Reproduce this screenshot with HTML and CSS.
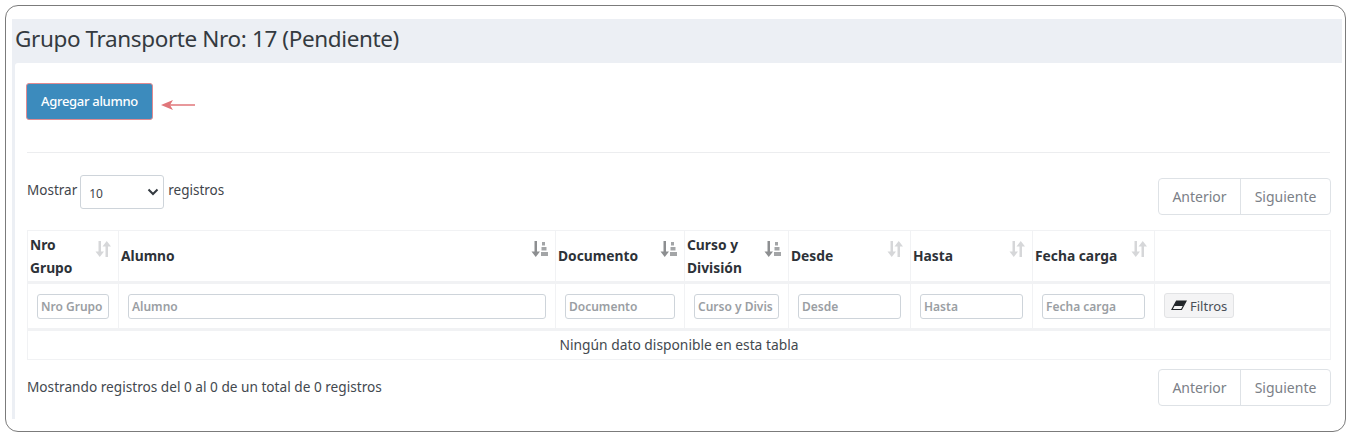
FILE: index.html
```html
<!DOCTYPE html>
<html lang="es">
<head>
<meta charset="utf-8">
<title>Grupo Transporte</title>
<link rel="stylesheet" href="styles.css">
</head>
<body>
<div class="frame">
  <div class="panel">
    <h1 class="title">Grupo Transporte Nro: 17 (Pendiente)</h1>
    <div class="card">
      <div class="actions">
        <button class="btn-add">Agregar alumno</button>
        <svg class="arrow" width="36" height="12" viewBox="0 0 36 12"><path d="M34 6H8" fill="none" stroke="#e0767a" stroke-width="1.700"/><path d="M0 6 12 1 9 6l3 5z" fill="#e0767a"/></svg>
      </div>
      <hr class="rule">
      <div class="top-bar">
        <label class="length">Mostrar
          <span class="select"><span>10</span><svg width="12" height="8" viewBox="0 0 12 8"><path d="M1.500 1.500 6 6l4.500-4.500" fill="none" stroke="#343a40" stroke-width="2"/></svg></span>
          registros</label>
        <div class="pager"><span class="page">Anterior</span><span class="page">Siguiente</span></div>
      </div>
      <table class="grid">
        <colgroup>
          <col class="c1"><col class="c2"><col class="c3"><col class="c4"><col class="c5"><col class="c6"><col class="c7"><col class="c8">
        </colgroup>
        <thead>
          <tr class="head">
            <th>Nro Grupo<svg class="sort" width="16" height="16" viewBox="0 0 16 16"><path d="M3.500 0H6v10.500h3L4.750 16 .5 10.500h3zM10.500 16H13V5.500h3L11.750 0 7.500 5.500h3z" fill="#d6d7d9"/></svg></th>
            <th>Alumno<svg class="sort" width="17" height="16" viewBox="0 0 17 16"><path d="M3.500 0H6v10.500h3L4.750 16 .5 10.500h3z" fill="#8d8f91"/><path d="M11 1h3v3.500h-3zM10.500 6h5v3.500h-5zM10 11h7v4h-7z" fill="#a3a5a7"/></svg></th>
            <th>Documento<svg class="sort" width="17" height="16" viewBox="0 0 17 16"><path d="M3.500 0H6v10.500h3L4.750 16 .5 10.500h3z" fill="#8d8f91"/><path d="M11 1h3v3.500h-3zM10.500 6h5v3.500h-5zM10 11h7v4h-7z" fill="#a3a5a7"/></svg></th>
            <th>Curso y División<svg class="sort" width="17" height="16" viewBox="0 0 17 16"><path d="M3.500 0H6v10.500h3L4.750 16 .5 10.500h3z" fill="#8d8f91"/><path d="M11 1h3v3.500h-3zM10.500 6h5v3.500h-5zM10 11h7v4h-7z" fill="#a3a5a7"/></svg></th>
            <th>Desde<svg class="sort" width="16" height="16" viewBox="0 0 16 16"><path d="M3.500 0H6v10.500h3L4.750 16 .5 10.500h3zM10.500 16H13V5.500h3L11.750 0 7.500 5.500h3z" fill="#d6d7d9"/></svg></th>
            <th>Hasta<svg class="sort" width="16" height="16" viewBox="0 0 16 16"><path d="M3.500 0H6v10.500h3L4.750 16 .5 10.500h3zM10.500 16H13V5.500h3L11.750 0 7.500 5.500h3z" fill="#d6d7d9"/></svg></th>
            <th>Fecha carga<svg class="sort" width="16" height="16" viewBox="0 0 16 16"><path d="M3.500 0H6v10.500h3L4.750 16 .5 10.500h3zM10.500 16H13V5.500h3L11.750 0 7.500 5.500h3z" fill="#d6d7d9"/></svg></th>
            <th></th>
          </tr>
          <tr class="filters">
            <td><span class="field">Nro Grupo</span></td>
            <td><span class="field">Alumno</span></td>
            <td><span class="field">Documento</span></td>
            <td><span class="field">Curso y Divis</span></td>
            <td><span class="field">Desde</span></td>
            <td><span class="field">Hasta</span></td>
            <td><span class="field">Fecha carga</span></td>
            <td><button class="btn-filter"><svg width="16" height="11" viewBox="0 0 16 11"><path d="M5.500 1H15L10.500 9.500H1z" fill="none" stroke="#212529" stroke-width="1.200"/><path d="M5.500 1H15L12 6H3z" fill="#212529"/></svg>Filtros</button></td>
          </tr>
        </thead>
        <tbody>
          <tr class="empty"><td colspan="8">Ningún dato disponible en esta tabla</td></tr>
        </tbody>
      </table>
      <div class="bottom-bar">
        <div class="info">Mostrando registros del 0 al 0 de un total de 0 registros</div>
        <div class="pager"><span class="page">Anterior</span><span class="page">Siguiente</span></div>
      </div>
    </div>
  </div>
</div>
</body>
</html>
```
FILE: styles.css
```css
* { box-sizing: border-box; }
html, body { margin: 0; background: #fff; }
body {
  height: 439px;
  padding: 5px 5px 7px 5px;
  font-family: "Noto Sans", sans-serif;
  color: #343a40;
  overflow: hidden;
}
.frame {
  height: 427px;
  border: 1px solid #7b7b7b;
  border-radius: 13px;
  padding: 13px 3px 0 6px;
  overflow: hidden;
}
.panel {
  height: 400px;
  background: #eceff4;
  display: flex;
  flex-direction: column;
}
.title {
  margin: 0;
  height: 44px;
  padding: 3px 0 0 3px;
  font-size: 22.500px;
  letter-spacing: -0.380px;
  line-height: 34px;
  font-weight: 400;
  color: #343a40;
}
.card {
  flex: 1;
  margin-left: 3px;
  background: #fff;
  border-radius: 3px 0 0 0;
  padding: 20px 12px 0 12px;
}
.actions {
  display: flex;
  align-items: center;
  gap: 8px;
  margin-left: -1px;
  height: 37px;
}
.btn-add {
  width: 127px;
  height: 37px;
  padding: 0 0 2px;
  background: #3c8bbd;
  border: 1px solid #e08a90;
  border-radius: 3px;
  color: #fff;
  font: 500 13px "Noto Sans", sans-serif;
  letter-spacing: -0.300px;
}
.arrow { margin-top: 7px; }
.rule {
  margin: 32px 0 0;
  border: 0;
  border-top: 1px solid #ecedef;
}
.top-bar {
  display: flex;
  justify-content: space-between;
  align-items: flex-start;
  height: 77px;
  padding-top: 22px;
}
.length {
  display: flex;
  align-items: flex-start;
  font-size: 13.500px;
  line-height: 31px;
  gap: 3px;
  color: #3f454b;
  height: 33px;
}
.select {
  width: 84px;
  height: 34px;
  margin-right: 1px;
  border: 1px solid #ced4da;
  border-radius: 3px;
  display: flex;
  align-items: center;
  justify-content: space-between;
  padding: 0 4px 0 8px;
  font-size: 12px;
}
.select span { margin-top: 2px; }
.pager {
  display: flex;
  height: 37px;
  margin-top: 3px;
  margin-right: -1px;
  border: 1px solid #dee2e6;
  border-radius: 4px;
  color: #7b8087;
  font-size: 14px;
}
.page {
  display: flex;
  align-items: center;
  justify-content: center;
  width: 81px;
}
.page + .page {
  width: 90px;
  border-left: 1px solid #dee2e6;
}
.grid {
  table-layout: fixed;
  border-collapse: collapse;
  width: 1303px;
  border: 1px solid #f1f2f4;
}
.c1 { width: 91px; }
.c2 { width: 437px; }
.c3 { width: 129px; }
.c4 { width: 104px; }
.c5 { width: 122px; }
.c6 { width: 122px; }
.c7 { width: 122px; }
.c8 { width: 176px; }
.head th {
  position: relative;
  height: 52px;
  padding: 1px 22px 2px 2px;
  border: 1px solid #f1f2f4;
  border-bottom: 3px solid #f1f2f4;
  text-align: left;
  font-size: 13.800px;
  line-height: 23px;
  font-weight: 700;
  color: #2d3238;
}
.sort {
  position: absolute;
  top: 10px;
  right: 7px;
}
.filters td {
  height: 47px;
  padding: 0 9px;
  border: 1px solid #f1f2f4;
  border-bottom: 3px solid #f1f2f4;
  text-align: center;
}
.field {
  display: block;
  height: 25px;
  padding: 0 3px;
  overflow: hidden;
  white-space: nowrap;
  border: 1px solid #ced4da;
  border-radius: 3px;
  color: #9a9ea3;
  font-size: 12px;
  font-weight: 600;
  line-height: 23px;
  text-align: left;
}
.btn-filter {
  display: flex;
  align-items: center;
  gap: 3px;
  width: 70px;
  height: 25px;
  margin-top: -1px;
  padding: 0 0 0 6px;
  background: #f4f4f5;
  border: 1px solid #e2e3e5;
  border-radius: 3px;
  color: #4a5058;
  font: 400 13px "Noto Sans", sans-serif;
}
.empty td {
  height: 29px;
  padding: 0;
  text-align: center;
  font-size: 13.800px;
  line-height: 28px;
  color: #43494f;
}
.bottom-bar {
  display: flex;
  justify-content: space-between;
  align-items: flex-start;
  padding-top: 6px;
}
.info {
  margin-top: 5px;
  font-size: 13.650px;
  line-height: 32px;
  color: #43494f;
}
```
